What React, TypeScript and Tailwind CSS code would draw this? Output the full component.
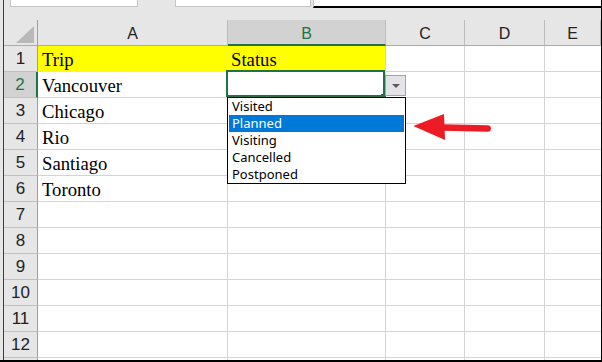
import React from "react";

const SANS = "[font-family:'Liberation_Sans',Arial,sans-serif]";
const SERIF = "[font-family:'Liberation_Serif','Times_New_Roman',serif]";
const UI = "[font-family:'Noto_Sans','Open_Sans',sans-serif]";

const data: { a: string; b: string; yellow?: boolean }[] = [
  { a: "Trip", b: "Status", yellow: true },
  { a: "Vancouver", b: "" },
  { a: "Chicago", b: "" },
  { a: "Rio", b: "" },
  { a: "Santiago", b: "" },
  { a: "Toronto", b: "" },
  { a: "", b: "" },
  { a: "", b: "" },
  { a: "", b: "" },
  { a: "", b: "" },
  { a: "", b: "" },
  { a: "", b: "" },
  { a: "", b: "" },
];

const options = ["Visited", "Planned", "Visiting", "Cancelled", "Postponed"];

function HeaderCell({ label, className }: { label: string; className: string }) {
  return (
    <div
      className={`flex items-center justify-center pt-[2px] border-r border-b border-r-[#bcbcbc] border-b-[#ababab] text-[16px] leading-none ${SANS} ${className}`}
    >
      {label}
    </div>
  );
}

export default function App() {
  return (
    <div className="relative w-[602px] h-[362px] overflow-hidden flex bg-[#e6e6e6] border-r border-b-2 border-black">
      <div className="w-[3px] shrink-0 bg-[#e6e6e6]" />
      <div className="w-px shrink-0 bg-[#2a4a34]" />
      <div className="flex-1 flex flex-col min-w-0">
        {/* top strip (formula bar remnants) */}
        <div className="h-[20px] shrink-0 flex items-start">
          <div className="ml-[6px] w-[128px] h-[7px] bg-white border-l border-r border-b border-[#c6c6c6]" />
          <div className="ml-[37px] w-[136px] h-[7px] bg-white border-l border-r border-b border-[#c6c6c6]" />
          <div className="ml-[2px] flex-1 h-[8px] bg-white border-l border-l-[#c6c6c6] border-b-2 border-b-black" />
        </div>

        {/* column headers */}
        <div className="h-[26px] shrink-0 flex">
          <div className="w-[34px] shrink-0 flex items-end justify-end pr-[3px] pb-[2px] border-r border-b border-r-[#9f9f9f] border-b-[#ababab]">
            <svg width="18" height="17" viewBox="0 0 18 17">
              <polygon points="0,17 18,17 18,0" fill="#b9b9b9" />
            </svg>
          </div>
          <HeaderCell label="A" className="w-[190px] shrink-0 text-[#222]" />
          <div
            className={`w-[158px] shrink-0 flex items-center justify-center pt-[3px] bg-[#d2d2d2] border-r border-r-[#bcbcbc] border-b-2 border-b-[#217346] text-[16px] leading-none text-[#217346] ${SANS}`}
          >
            B
          </div>
          <HeaderCell label="C" className="w-[79px] shrink-0 text-[#222]" />
          <HeaderCell label="D" className="w-[80px] shrink-0 text-[#222]" />
          <HeaderCell label="E" className="flex-1 text-[#222]" />
        </div>

        {/* rows */}
        {data.map((r, i) => {
          const n = i + 1;
          const active = n === 2;
          return (
            <div key={n} className="h-[26px] shrink-0 flex">
              <div
                className={`w-[34px] shrink-0 flex items-center justify-center border-b border-b-[#c0c0c0] text-[17px] leading-none ${SANS} ${
                  active
                    ? "bg-[#d2d2d2] border-r-2 border-r-[#217346] text-[#217346]"
                    : "bg-[#e6e6e6] border-r border-r-[#9f9f9f] text-[#222]"
                }`}
              >
                {n <= 12 ? n : ""}
              </div>
              <div
                className={`w-[190px] shrink-0 flex items-end pl-[4px] pb-[2px] border-r border-b text-[18.7px] leading-[19px] text-black ${SERIF} ${
                  r.yellow ? "bg-[#ffff00] border-[#ffff00]" : "bg-white border-[#d4d4d4]"
                }`}
              >
                {r.a}
              </div>
              <div
                className={`w-[158px] shrink-0 flex items-end pl-[3px] pb-[2px] border-r border-b text-[18.7px] leading-[19px] text-black ${SERIF} ${
                  r.yellow ? "bg-[#ffff00] border-b-[#ffff00] border-r-[#d4d4d4]" : "bg-white border-[#d4d4d4]"
                }`}
              >
                {r.b}
              </div>
              <div className="w-[79px] shrink-0 bg-white border-r border-b border-[#d4d4d4]" />
              <div className="w-[80px] shrink-0 bg-white border-r border-b border-[#d4d4d4]" />
              <div className="flex-1 bg-white border-b border-[#d4d4d4]" />
            </div>
          );
        })}
      </div>

      {/* active cell B2 */}
      <div className="absolute left-[226px] top-[70px] w-[159px] h-[27px] border-2 border-[#217346]" />
      <div className="absolute left-[381px] top-[94px] w-[5px] h-[5px] bg-[#217346]" />

      {/* dropdown button */}
      <div className="absolute left-[385px] top-[75px] w-[21px] h-[21px] bg-[#e3e3e8] border border-[#a3a3a3] flex items-center justify-center">
        <svg width="8" height="4" viewBox="0 0 8 4">
          <polygon points="0,0 8,0 4,4" fill="#5a5a5a" />
        </svg>
      </div>

      {/* dropdown list */}
      <div className="absolute left-[227px] top-[97px] w-[179px] bg-white border border-black px-px">
        {options.map((o) => (
          <div
            key={o}
            className={`h-[17px] pl-[3px] text-[13px] leading-[17px] ${UI} ${
              o === "Planned" ? "bg-[#0078d7] text-white" : "text-black"
            }`}
          >
            {o}
          </div>
        ))}
      </div>

      {/* red arrow */}
      <svg
        className="absolute left-[410px] top-[110px]"
        width="84"
        height="34"
        viewBox="0 0 84 34"
      >
        <line x1="32" y1="17.5" x2="77.7" y2="18.5" stroke="#ed1c24" strokeWidth="6.5" strokeLinecap="round" />
        <polygon points="3.3,16 34,4 35,30" fill="#ed1c24" />
      </svg>
    </div>
  );
}
